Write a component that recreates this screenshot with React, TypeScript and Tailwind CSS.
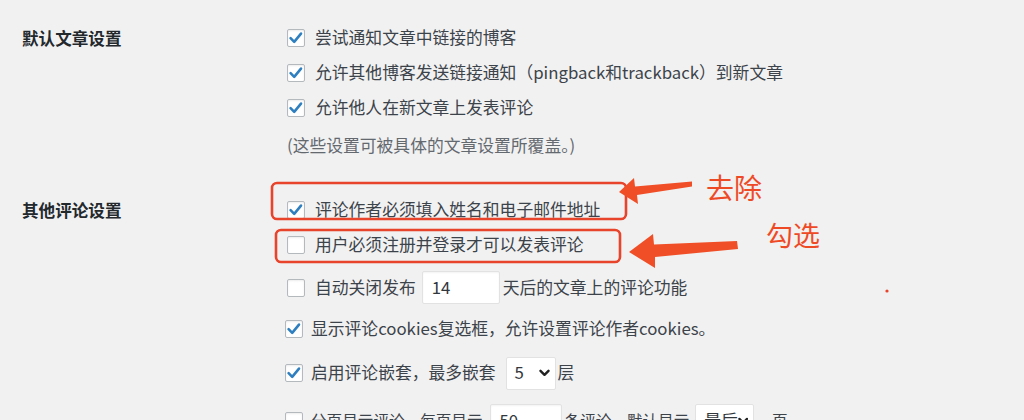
import React from "react";

const FONT = '"PingFang SC","Noto Sans CJK SC","Noto Sans",sans-serif';

function Check({ checked }: { checked: boolean }) {
  return (
    <span className="w-[18px] h-[18px] shrink-0 bg-white border border-[#b4b9be] rounded-[2px] flex items-center justify-center shadow-[inset_0_1px_2px_rgba(0,0,0,0.08)]">
      {checked && (
        <svg width="16" height="16" viewBox="0 0 16 16">
          <path d="M2.6 8.2 L6.2 11.8 L13 3.6" fill="none" stroke="#2e7fc0" strokeWidth="2.6" strokeLinecap="round" strokeLinejoin="round" />
        </svg>
      )}
    </span>
  );
}

function Row({ h, checked, children, shift }: { h: string; checked: boolean; children: React.ReactNode; shift?: boolean }) {
  return (
    <div className={`${h} flex items-center ${shift ? "-ml-[2px] gap-[8px]" : "gap-[10px]"}`}>
      <Check checked={checked} />
      <div className="flex items-center whitespace-nowrap">{children}</div>
    </div>
  );
}

function Input({ value, w }: { value: string; w: string }) {
  return (
    <span className={`${w} h-[33px] bg-white border border-[#e2e2e2] rounded-[2px] flex items-center pl-[9px] text-[#32373c] shadow-[inset_0_1px_2px_rgba(0,0,0,0.05)]`}>
      {value}
    </span>
  );
}

function Select({ value, w }: { value: string; w: string }) {
  return (
    <span className={`${w} h-[33px] bg-white border border-[#e2e2e2] rounded-[2px] flex items-center justify-between pl-[8px] pr-[5px] text-[#32373c]`}>
      <span>{value}</span>
      <svg width="11" height="8" viewBox="0 0 11 8">
        <path d="M1.5 1.8 L5.5 5.8 L9.5 1.8" fill="none" stroke="#222" strokeWidth="2.4" strokeLinecap="round" strokeLinejoin="round" />
      </svg>
    </span>
  );
}

export default function App() {
  return (
    <div
      className="relative w-[1024px] h-[420px] overflow-hidden bg-[#f1f1f1] text-[16.8px] text-[#3c434a]"
      style={{ fontFamily: FONT }}
    >
      {/* Section 1 */}
      <div className="flex pt-[20.5px]">
        <div className="w-[287px] pl-[22px] h-[35px] flex items-center font-semibold text-[16.6px] text-[#23282d]">
          默认文章设置
        </div>
        <div className="flex flex-col">
          <Row h="h-[35px]" checked>尝试通知文章中链接的博客</Row>
          <Row h="h-[35px]" checked>允许其他博客发送链接通知（pingback和trackback）到新文章</Row>
          <Row h="h-[35px]" checked>允许他人在新文章上发表评论</Row>
          <div className="h-[40px] flex items-center text-[#646970]">(这些设置可被具体的文章设置所覆盖。)</div>
        </div>
      </div>

      {/* Section 2 */}
      <div className="flex mt-[27px]">
        <div className="w-[287px] pl-[22px] h-[35px] flex items-center font-semibold text-[16.6px] text-[#23282d]">
          其他评论设置
        </div>
        <div className="flex flex-col">
          <Row h="h-[35px]" checked>评论作者必须填入姓名和电子邮件地址</Row>
          <Row h="h-[35px]" checked={false}>用户必须注册并登录才可以发表评论</Row>
          <Row h="h-[50px]" checked={false}>
            <span>自动关闭发布</span>
            <span className="ml-[6px] mr-[3px]"><Input value="14" w="w-[78px]" /></span>
            <span>天后的文章上的评论功能</span>
          </Row>
          <Row h="h-[33px]" checked shift>显示评论cookies复选框，允许设置评论作者cookies。</Row>
          <Row h="h-[55px]" checked shift>
            <span>启用评论嵌套，最多嵌套</span>
            <span className="ml-[10px] mr-[2px]"><Select value="5" w="w-[50px]" /></span>
            <span>层</span>
          </Row>
          <Row h="h-[40px]" checked={false} shift>
            <span className="text-[15.6px]">分页显示评论，每页显示</span>
            <span className="ml-[7px] mr-[3px]"><Input value="50" w="w-[72px]" /></span>
            <span className="text-[15.6px]">条评论，默认显示</span>
            <span className="ml-[6px] mr-[2px]"><Select value="最后" w="w-[59px]" /></span>
            <span className="text-[15.6px]">一页</span>
          </Row>
        </div>
      </div>

      {/* Annotations overlay */}
      <svg className="absolute left-0 top-0 pointer-events-none" width="1024" height="420" viewBox="0 0 1024 420">
        <rect x="272" y="183" width="354" height="36" rx="5" fill="none" stroke="#e8432b" strokeWidth="2.6" />
        <rect x="276" y="230" width="344" height="32" rx="5" fill="none" stroke="#e8432b" strokeWidth="2.6" />
        <polygon
          points="619,192 634,178 635,186.5 692,181.5 692,186.5 637,195 638,204"
          fill="#f04e27"
        />
        <polygon
          points="629,252 653,234 654,244.5 737,241 738,249 655,257 655,268"
          fill="#f04e27"
        />
        <circle cx="887" cy="291" r="1.6" fill="#e8432b" />
      </svg>
      <span className="absolute left-[706px] top-[170px] text-[28px] leading-[34px] text-[#ef4a26]">去除</span>
      <span className="absolute left-[766px] top-[218px] text-[27px] leading-[34px] text-[#ef4a26]">勾选</span>
    </div>
  );
}
